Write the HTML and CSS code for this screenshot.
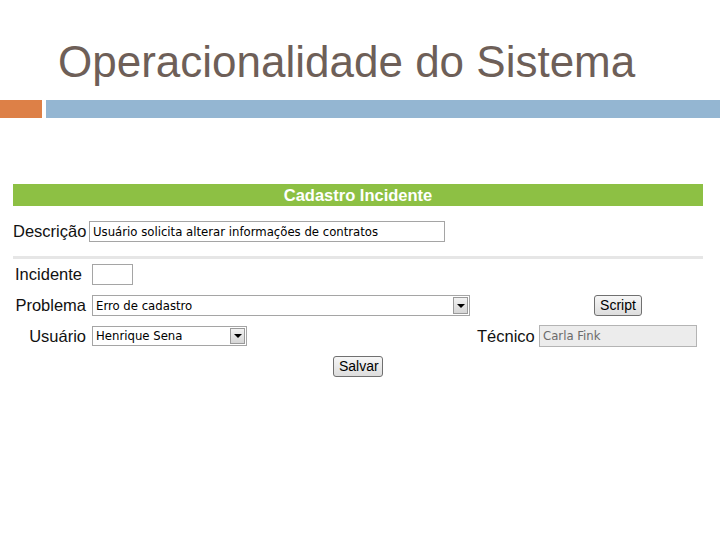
FILE: index.html
```html
<!DOCTYPE html>
<html lang="pt">
<head>
<meta charset="utf-8">
<title>Operacionalidade do Sistema</title>
<link rel="stylesheet" href="styles.css">
</head>
<body>
<div class="slide">
  <h1 class="title">Operacionalidade do Sistema</h1>
  <div class="bars">
    <div class="bar-orange"></div>
    <div class="bar-blue"></div>
  </div>
  <form class="form">
    <div class="form-head">Cadastro Incidente</div>
    <div class="row row-desc">
      <label class="lbl lbl-desc">Descrição</label>
      <div class="field field-desc">Usuário solicita alterar informações de contratos</div>
    </div>
    <div class="sep"></div>
    <div class="row row-inc">
      <label class="lbl lbl-inc">Incidente</label>
      <div class="field field-inc"></div>
    </div>
    <div class="row row-prob">
      <label class="lbl">Problema</label>
      <div class="select select-prob"><span class="sel-text">Erro de cadastro</span><span class="arrow"><span class="tri"></span></span></div>
      <button type="button" class="btn btn-script">Script</button>
    </div>
    <div class="row row-user">
      <label class="lbl">Usuário</label>
      <div class="select select-user"><span class="sel-text">Henrique Sena</span><span class="arrow"><span class="tri"></span></span></div>
      <label class="lbl lbl-tec">Técnico</label>
      <div class="field field-tec">Carla Fink</div>
    </div>
    <div class="row row-save">
      <button type="button" class="btn btn-save">Salvar</button>
    </div>
  </form>
</div>
</body>
</html>
```
FILE: styles.css
```css
html, body {
  margin: 0;
  padding: 0;
  background: #ffffff;
}
.slide {
  width: 720px;
  height: 540px;
  overflow: hidden;
  font-family: "Liberation Sans", Arial, sans-serif;
}
.title {
  margin: 0;
  padding: 37px 0 0 58px;
  height: 50px;
  line-height: 50px;
  font-size: 44px;
  font-weight: normal;
  color: #6e5f58;
  margin-bottom: 13px;
}
.bars {
  display: flex;
  gap: 4px;
  height: 18px;
}
.bar-orange {
  width: 42px;
  background: #dd8047;
}
.bar-blue {
  flex: 1;
  background: #94b6d2;
}
.form {
  margin: 66px 0 0 13px;
  width: 690px;
}
.form-head {
  height: 22px;
  line-height: 22px;
  background: #8dc044;
  color: #ffffff;
  font-weight: bold;
  font-size: 16.5px;
  text-align: center;
}
.row {
  display: flex;
  align-items: center;
}
.lbl {
  font-size: 16.5px;
  color: #111111;
  width: 73px;
  text-align: right;
  white-space: nowrap;
  flex: none;
}
.row-desc {
  margin-top: 15px;
  gap: 2px;
}
.lbl-desc {
  width: 74px;
  text-align: left;
}
.field {
  box-sizing: border-box;
  border: 1px solid #a5a5a5;
  height: 21px;
  font-family: "DejaVu Sans Condensed", "DejaVu Sans", sans-serif;
  font-size: 13px;
  line-height: 19px;
  padding: 0 3px;
  color: #000;
  background: #fff;
  white-space: nowrap;
  overflow: hidden;
}
.field-desc {
  width: 356px;
}
.sep {
  margin-top: 14px;
  height: 3px;
  background: #e6e6e6;
}
.row-inc {
  margin-top: 5px;
  gap: 10px;
}
.lbl-inc {
  width: 69px;
}
.field-inc {
  width: 41px;
}
.row-prob {
  margin-top: 10px;
  gap: 6px;
}
.select {
  position: relative;
  box-sizing: border-box;
  height: 21px;
  border: 1px solid #a5a5a5;
  background: #fff;
  font-family: "DejaVu Sans Condensed", "DejaVu Sans", sans-serif;
  font-size: 13px;
  line-height: 19px;
  padding: 0 3px;
  white-space: nowrap;
}
.select-prob {
  width: 378px;
}
.select-user {
  width: 155px;
  height: 20px;
  line-height: 18px;
}
.arrow {
  position: absolute;
  top: 1px;
  right: 1px;
  bottom: 1px;
  width: 15px;
  box-sizing: border-box;
  border: 1px solid #9a9a9a;
  background: linear-gradient(#f2f2f2, #d6d6d6);
  display: flex;
  align-items: center;
  justify-content: center;
}
.tri {
  width: 0;
  height: 0;
  border-left: 4px solid transparent;
  border-right: 4px solid transparent;
  border-top: 4px solid #000;
}
.btn {
  box-sizing: border-box;
  height: 21px;
  padding: 0 5px;
  border: 1px solid #707070;
  border-radius: 3px;
  background: linear-gradient(#f6f6f6, #dddddd);
  font-family: "Liberation Sans", Arial, sans-serif;
  font-size: 14px;
  color: #000;
  line-height: 19px;
}
.btn-script {
  margin-left: 118px;
  width: 48px;
}
.row-user {
  margin-top: 9px;
  gap: 6px;
}
.lbl-tec {
  width: 56px;
  margin-left: 224px;
}
.field-tec {
  width: 158px;
  height: 22px;
  line-height: 20px;
  background: #ececec;
  color: #6b6b6b;
  border-color: #b4b4b4;
}
.row-save {
  margin-top: 9px;
  justify-content: center;
}
.btn-save {
  width: 50px;
}
```
